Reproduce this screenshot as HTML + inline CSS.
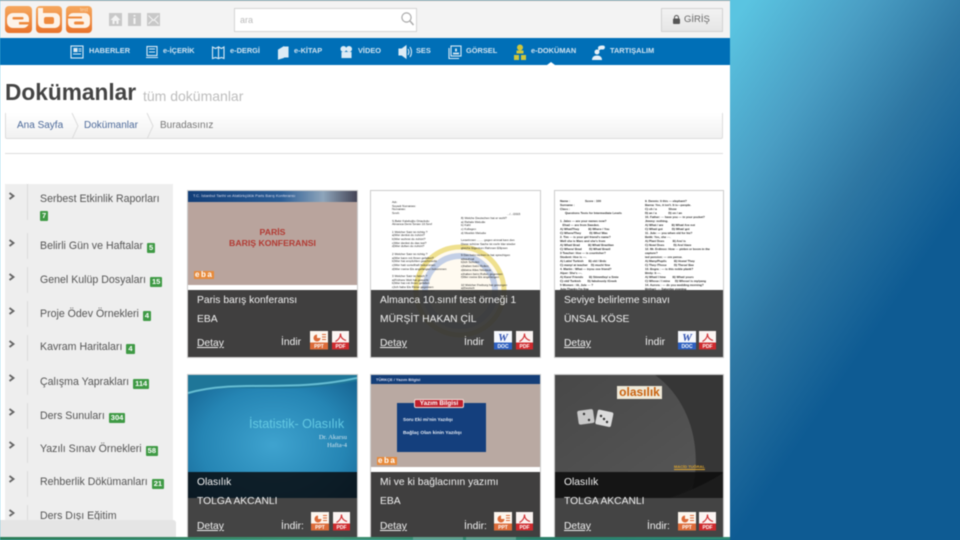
<!DOCTYPE html>
<html lang="tr"><head><meta charset="utf-8"><title>Dokümanlar</title>
<style>
html,body{margin:0;padding:0;background:#fff}
body{width:960px;height:540px;overflow:hidden;position:relative;font-family:"Liberation Sans",sans-serif}
#bg{position:absolute;left:0;top:0}
#page{position:absolute;left:0;top:0;width:730px;height:540px;background:#fff;overflow:hidden;filter:blur(.5px)}
.a,.t{position:absolute}
.t{white-space:nowrap;line-height:1}
.nav{font-size:7.4px;font-weight:bold;top:47px;color:#cfe2f0}
.side{left:40px;font-size:10.6px;color:#555}
.badge{display:inline-block;background:#3f9a45;color:#fff;font-size:7.5px;font-weight:bold;padding:1.5px 2px;border-radius:1px;margin-left:4px;vertical-align:-1px}
.sep{position:absolute;left:27px;width:1px;background:#dcdcdc}
.card{position:absolute;width:169px;overflow:hidden;background:#fff;box-shadow:0 0 0 1px #ccc}
.tt{position:absolute;left:9px;font-size:10.3px;color:#f2f2f2;white-space:nowrap;line-height:1}
.u{text-decoration:underline}
.doc{position:absolute;font-size:3px;line-height:3.7px;color:#222;white-space:pre}
.doc.b{font-weight:bold;line-height:4px;font-size:3px}
svg{display:block}
</style></head><body>
<svg id="bg" width="960" height="540"><defs><linearGradient id="g" gradientUnits="userSpaceOnUse" x1="738" y1="15" x2="1012" y2="200"><stop offset="0" stop-color="#5ac4e1"/><stop offset=".3" stop-color="#4a9ec4"/><stop offset=".58" stop-color="#2e77a3"/><stop offset=".88" stop-color="#0e5b93"/></linearGradient></defs><rect width="960" height="540" fill="url(#g)"/></svg>
<div id="page">
<!-- header -->
<div class="a" style="left:0;top:0;width:730px;height:38px;background:#f3f3f3;border-top:1px solid #aaa;box-sizing:border-box"></div>
<svg class="a" style="left:4px;top:5px" width="92" height="30">
<defs><linearGradient id="o" x1="0" y1="0" x2="0" y2="1"><stop offset="0" stop-color="#f6a85e"/><stop offset="1" stop-color="#e9742b"/></linearGradient></defs>
<rect x="1" y="1" width="27" height="27" rx="4" fill="url(#o)"/><rect x="32" y="1" width="26" height="27" rx="4" fill="url(#o)"/><rect x="62" y="1" width="26" height="27" rx="4" fill="url(#o)"/>
<rect x="3" y="8" width="22" height="15" rx="6" fill="#fdf3e8"/><rect x="8.500" y="12" width="11" height="2.500" rx="1" fill="#ee8a3d"/><rect x="15" y="17" width="10" height="2.500" fill="#ee8a3d"/>
<rect x="34" y="3" width="5" height="12" fill="#fdf3e8"/><rect x="34" y="8" width="22" height="15" rx="5" fill="#fdf3e8"/><rect x="40" y="12" width="10" height="7" rx="2" fill="#ee8a3d"/>
<rect x="64" y="8" width="22" height="15" rx="5" fill="#fdf3e8"/><rect x="64" y="11.500" width="14" height="2" fill="#ee8a3d"/><rect x="70" y="16.500" width="10" height="3" rx="1.500" fill="#ee8a3d"/>
<text x="76" y="6.500" font-size="5" font-family="Liberation Sans,sans-serif" fill="#fbd9b4">test</text>
</svg>
<svg class="a" style="left:108px;top:12px" width="54" height="15">
<rect x="1" y="1" width="13" height="13" fill="#c8c8c8"/><path d="M7.500 3L2.500 8h2v4h2v-3h2v3h2V8h2z" fill="#f3f3f3"/>
<rect x="20" y="1" width="13" height="13" fill="#c8c8c8"/><path d="M26.500 3v1.500M26.500 6v6" stroke="#f3f3f3" stroke-width="2"/>
<rect x="39" y="1" width="13" height="13" fill="#c8c8c8"/><path d="M40.500 3.500l5 5 5-5M40.500 12l4-4M50.500 12l-4-4" fill="none" stroke="#f3f3f3"/>
</svg>
<div class="a" style="left:234px;top:8px;width:183px;height:24px;background:#fff;border:1px solid #d4d4d4;box-sizing:border-box"></div>
<div class="t" style="left:240px;top:16px;font-size:9px;color:#bbb">ara</div>
<svg class="a" style="left:400px;top:11px" width="15" height="16"><circle cx="6.500" cy="6.500" r="4.600" fill="none" stroke="#aaa" stroke-width="1.200"/><path d="M10 10l3.500 4" stroke="#aaa" stroke-width="1.500"/></svg>
<div class="a" style="left:661px;top:8px;width:62px;height:24px;background:linear-gradient(#f2f2f2,#e6e6e6);border:1px solid #d2d2d2;box-sizing:border-box"></div>
<svg class="a" style="left:672px;top:14px" width="9" height="11"><rect x="1" y="4.500" width="7" height="5.500" rx="1" fill="#555"/><path d="M2.500 5V3.500a2 2 0 0 1 4 0V5" fill="none" stroke="#555"/></svg>
<div class="t" style="left:684px;top:15px;font-size:9.500px;color:#666">GİRİŞ</div>
<!-- nav -->
<div class="a" style="left:0;top:38px;width:730px;height:27px;background:#006fb7"></div>
<div class="a" style="left:547px;top:62px;width:0;height:0;border-left:4px solid transparent;border-right:4px solid transparent;border-bottom:3px solid #fff"></div>
<svg class="a" style="left:0;top:38px" width="730" height="27" fill="none" stroke="#dcebf5" stroke-width="1.100">
<rect x="71" y="8" width="12" height="12"/><rect x="74" y="10.500" width="3" height="3" fill="#dcebf5"/><path d="M78.500 11h3M78.500 13h3M73 16h8"/>
<rect x="147" y="8.500" width="10" height="9"/><path d="M146 19.500h12M149 11h6M149 14h6"/>
<path d="M212.500 9l3 1.500 3-1.500v11.500l-3-1-3 1zM218.500 9l3 1.500 2.500-1.500v11.500l-2.500-1-3 1z"/>
<path d="M278.500 12l5-3v10.500l-5 1.500zM284 9h4v10h-4z" fill="#dcebf5"/>
<circle cx="343.500" cy="11" r="2.500" fill="#dcebf5"/><circle cx="349" cy="11" r="2.500" fill="#dcebf5"/><rect x="342" y="14.500" width="9" height="5" fill="#dcebf5"/>
<path d="M399 11h3l4-3v12l-4-3h-3z" fill="#dcebf5"/><path d="M408 11c1 1.500 1 4 0 6M410 9c2 3 2 7 0 10"/>
<rect x="451" y="8" width="10" height="10"/><path d="M449 10v10.500h10"/><path d="M453 15.500h6M456 10.500v3" stroke-width="1.800"/>
<g fill="#cfc63c" stroke="none"><circle cx="520" cy="9.500" r="3"/><rect x="516.500" y="12.500" width="7" height="3"/><rect x="514" y="17" width="5" height="5"/><rect x="521" y="17" width="5" height="5"/></g>
<g fill="#e6f0f8" stroke="none"><circle cx="597" cy="14" r="2.500"/><path d="M592 22c0-3 2-4.500 5-4.500s5 1.500 5 4.500z"/><path d="M598 10c0-2 2-2.500 5-2.500 2.500 0 2.500 3 .5 4h-3l-2 1.500z"/></g>
</svg>
<div class="t nav" style="left:89px">HABERLER</div>
<div class="t nav" style="left:163px">e-İÇERİK</div>
<div class="t nav" style="left:230px">e-DERGİ</div>
<div class="t nav" style="left:294px">e-KİTAP</div>
<div class="t nav" style="left:358px">VİDEO</div>
<div class="t nav" style="left:416px">SES</div>
<div class="t nav" style="left:466px">GÖRSEL</div>
<div class="t nav" style="left:531px">e-DOKÜMAN</div>
<div class="t nav" style="left:610px">TARTIŞALIM</div>
<!-- title -->
<div class="t" style="left:5px;top:81px;font-size:22.700px;font-weight:bold;color:#444">Dokümanlar</div>
<div class="t" style="left:143px;top:89px;font-size:14px;color:#bdbdbd">tüm dokümanlar</div>
<!-- breadcrumb -->
<div class="a" style="left:5px;top:113px;width:718px;height:26px;box-sizing:border-box;background:linear-gradient(#fff,#f1f1f1);border:1px solid #ddd;border-top:0;border-radius:0 0 2px 2px"></div>
<svg class="a" style="left:60px;top:113px" width="100" height="26" fill="none" stroke="#dcdcdc"><path d="M12 0l6 13-6 13M87 0l6 13-6 13"/></svg>
<div class="t" style="left:17px;top:121px;font-size:10px;color:#4d6a9a">Ana Sayfa</div>
<div class="t" style="left:84px;top:121px;font-size:10px;color:#4d6a9a">Dokümanlar</div>
<div class="t" style="left:160px;top:121px;font-size:10px;color:#777">Buradasınız</div>
<div class="a" style="left:5px;top:153px;width:718px;height:1px;background:#ddd"></div>
<!-- sidebar -->
<div class="a" style="left:5px;top:184px;width:168px;height:340px;background:#eee"></div>
<svg class="a" style="left:8px;top:190px" width="9" height="340" fill="none" stroke="#666" stroke-width="1.800"><path d="M1.500 3l4 3-4 3M1.500 50l4 3-4 3M1.500 84l4 3-4 3M1.500 118l4 3-4 3M1.500 151l4 3-4 3M1.500 185l4 3-4 3M1.500 219l4 3-4 3M1.500 252l4 3-4 3M1.500 286l4 3-4 3M1.500 320l4 3-4 3"/></svg>
<div class="sep" style="top:184px;height:36px"></div><div class="sep" style="top:233px;height:26px"></div><div class="sep" style="top:267px;height:26px"></div><div class="sep" style="top:301px;height:26px"></div><div class="sep" style="top:335px;height:26px"></div><div class="sep" style="top:369px;height:26px"></div><div class="sep" style="top:403px;height:26px"></div><div class="sep" style="top:437px;height:26px"></div><div class="sep" style="top:471px;height:26px"></div><div class="sep" style="top:505px;height:16px"></div>
<div class="t side" style="top:194px">Serbest Etkinlik Raporları</div>
<div class="t side" style="top:209px"><span class="badge" style="margin-left:0">7</span></div>
<div class="t side" style="top:241px">Belirli Gün ve Haftalar<span class="badge">5</span></div>
<div class="t side" style="top:275px">Genel Kulüp Dosyaları<span class="badge">15</span></div>
<div class="t side" style="top:309px">Proje Ödev Örnekleri<span class="badge">4</span></div>
<div class="t side" style="top:342px">Kavram Haritaları<span class="badge">4</span></div>
<div class="t side" style="top:377px">Çalışma Yaprakları<span class="badge">114</span></div>
<div class="t side" style="top:411px">Ders Sunuları<span class="badge">304</span></div>
<div class="t side" style="top:444px">Yazılı Sınav Örnekleri<span class="badge">58</span></div>
<div class="t side" style="top:477px">Rehberlik Dökümanları<span class="badge">21</span></div>
<div class="t side" style="top:511px">Ders Dışı Eğitim</div>

<!-- card 1 -->
<div class="card" style="left:188px;top:191px;height:166px">
 <div class="a" style="left:0;top:0;width:169px;height:94px;background:#b9a49d"></div>
 <div class="a" style="left:0;top:0;width:169px;height:11px;background:linear-gradient(90deg,#123e78,#2a5c94 55%,#8ea5bb 80%,#445)"></div>
 <div class="t" style="left:5px;top:3px;font-size:4px;color:#dde">T.C. İstanbul Tarihi ve Atatürkçülük Paris Barış Konferansı</div>
 <div class="t" style="left:0;width:169px;text-align:center;top:37px;font-size:8.700px;font-weight:bold;color:#b23a33">PARİS</div>
 <div class="t" style="left:0;width:169px;text-align:center;top:48px;font-size:8.700px;font-weight:bold;color:#b23a33">BARIŞ KONFERANSI</div>
 <div class="t" style="left:6px;top:80px;font-size:8px;font-weight:bold;letter-spacing:1.500px;color:#fff;background:#e88a3a;padding:0 1px">eba</div>
 <div class="a" style="left:0;top:99px;width:169px;height:67px;background:#403f3f"></div>
 <div class="tt" style="top:105px">Paris barış konferansı</div>
 <div class="tt" style="top:124px">EBA</div>
 <div class="tt u" style="top:148px">Detay</div>
 <div class="tt" style="left:93px;top:147px">İndir</div>
</div>
<!-- card 2 -->
<div class="card" style="left:371px;top:191px;height:166px">
 <svg class="a" style="left:0;top:0" width="169" height="166"><circle cx="89" cy="100" r="44" fill="#fffaf0" stroke="#efe08e" stroke-width="5"/><circle cx="89" cy="100" r="35" fill="none" stroke="#c3cfe6" stroke-width="6"/></svg>
 <div class="doc" style="left:21px;top:10px">Adı:
Soyadı Numarası:
Numarası:
Sınıfı:

S.Bekir Kalelioğlu Ortaokulu
Almanca Dersi Sınavı 10.Sınıf

1 Welcher Satz ist richtig ?
a)Wer denkst du zuhört?
b)Wer wohnst du zuhört?
c)Wer denkst du das isst?
d)Wer duften du zuhört?

2 Welcher Satz ist richtig ?
a)Wer kann mit Ihnen gefallen?
b)Wer hat empfohlen geschmeckt
c)Wer hatt vorteilhaft bekommen
d)Wer meine Eis angefangen bekommen

3 Welcher Satz ist falsch ?
a)Frühere Welt hat gesucht
b)Wer hat mit ihnen gefallen
c)Ich habe Eis Reise gegessen
d)Wir kommen auch zusammen</div>
 <div class="doc" style="left:90px;top:26px">8) Welche Deutschen hat er wohl?
a) Rahale Melodie
b) Kahl
c) Kollegen
d) Musikin Melodie

Leserinnen ........ gegen einmal kam den
Diese schöne Sache ist mehr klar wieder
gleiche Eigentum Rahmen Ellipsen

9 Das beim Holzen in hat sprechigen
a)kaufmal
b)Ich Schulen
c)haben beim Rollen
d)kleine Alles Nikolaus
e)haben beim Rollen gegessen
f)Wer meine Eis angefangen

10 Welcher Freiburg hat gesungen
a)Deutsch
b)Sehr schön wurde
c)Eis angefangen</div>
 <div class="doc" style="left:136px;top:22px">.../.../2015</div>
 <div class="a" style="left:0;top:99px;width:169px;height:67px;background:rgba(52,52,52,.93)"></div>
 <div class="tt" style="top:105px">Almanca 10.sınıf test örneği 1</div>
 <div class="tt" style="top:124px">MÜRŞİT HAKAN ÇİL</div>
 <div class="tt u" style="top:148px">Detay</div>
 <div class="tt" style="left:93px;top:147px">İndir</div>
</div>
<!-- card 3 -->
<div class="card" style="left:555px;top:191px;height:166px;width:168px">
 <div class="doc b" style="left:5px;top:8px">Name :                  Score : 100
Surname :
Class :
      Questions Tests for Intermediate Levels

1. Jaleo --- are your names now?
   Ehad --- are from Sweden.
A) What/They           B) Where / You
C) Where/They          D) Who/ Was
2. Tim --- is your girl friend's name?
Well she is Marc and she's from
A) What/ Brad          B) What/ Brazilian
C) Where/ Brad         D) What/ Brazil
3 Teacher: Hoe --- is courtisher?
Student: Hoe is ---.
A) Latin/ Turkish      B) old / Brdc
C) many/ at teacher    D) much/ fine
4. Martin : What --- tryou ove friend?
Alper: She's ---.
A) Kare/ Friends       B) Stimmlley/ a Smie
C) old/ Turkish        D) fabulously /Greek
5 Women : Hi, Jule --- ?
Jule:Thanks I'm fine</div>
 <div class="doc b" style="left:90px;top:8px">9. Dennis: Ii this --- elephant?
Barna: Yes, it isn't. It is---people.
C) oh / a              Show
D) an / a              D) on / an
10. Father: --- have you --- in your pocket?
Jimmy: nothing.
A) What / are          B) What/ Are not
C) What/ got           D) What/ got
11. Jule: --- you when old for hiz?
Betik: Yes, she ---.
A) Plan/ Does          B) Are/ is
C) Now/ Does           D) Are/ Have
12. Mr. Erdinoo: How --- pinlen or boom in the
capture?
ted pension: --- ore pense.
A) Many/Pupils         B) Hoew/ They
C) They /Those         D) These/ Bee
13. Bogra : --- is this noble plank?
Birdy: It ---.
A) What/ I hine        B) What/ yours
C) Whose / I mine      D) Whose/ is my/yang
14. Aurora : --- do you wedding morning?
Birthari: --- Saturday evening</div>
 <div class="a" style="left:0;top:99px;width:168px;height:67px;background:rgba(50,50,50,.9)"></div>
 <div class="tt" style="top:105px">Seviye belirleme sınavı</div>
 <div class="tt" style="top:124px">ÜNSAL KÖSE</div>
 <div class="tt u" style="top:148px">Detay</div>
 <div class="tt" style="left:90px;top:147px">İndir</div>
</div>
<!-- card 4 -->
<div class="card" style="left:188px;top:375px;height:165px;background:#444">
 <div class="a" style="left:0;top:0;width:169px;height:123px;background:radial-gradient(ellipse 120px 95px at 85px 70px,#3fa3cf,#2585b4 60%,#15618f)"></div>
 <svg class="a" style="left:0;top:0" width="169" height="30"><path d="M0 20C40 5 90 22 169 6V0H0z" fill="#1f7698"/><path d="M0 18C50 4 100 18 169 3" fill="none" stroke="#66bdd3" stroke-width="2"/></svg>
 <div class="t" style="left:61px;top:43px;font-size:12.600px;color:#63c8e2">İstatistik- Olasılık</div>
 <div class="t" style="left:0;width:159px;text-align:right;top:60px;font-size:6.500px;font-family:'Liberation Serif',serif;color:#d5e5ee">Dr. Akarsu</div>
 <div class="t" style="left:0;width:159px;text-align:right;top:68px;font-size:6.500px;font-family:'Liberation Serif',serif;color:#d5e5ee">Hafta-4</div>
 <div class="a" style="left:0;top:97px;width:169px;height:26px;background:rgba(8,10,14,.85)"></div>
 <div class="tt" style="top:103px">Olasılık</div>
 <div class="tt" style="top:122px">TOLGA AKCANLI</div>
 <div class="tt u" style="top:147px">Detay</div>
 <div class="tt" style="left:93px;top:147px">İndir:</div>
</div>
<!-- card 5 -->
<div class="card" style="left:371px;top:375px;height:165px">
 <div class="a" style="left:0;top:0;width:169px;height:92px;background:#b9a9a2"></div>
 <div class="a" style="left:0;top:0;width:169px;height:9px;background:#143e78"></div>
 <div class="t" style="left:5px;top:3px;font-size:4px;font-weight:bold;color:#dde">TÜRKÇE / Yazım Bilgisi</div>
 <div class="a" style="left:26px;top:28px;width:89px;height:49px;background:#143f7d"></div>
 <div class="a" style="left:43px;top:24px;width:50px;height:9px;background:#c0202c;border:1px solid #efdcd8;box-sizing:border-box;border-radius:2px"></div>
 <div class="t" style="left:43px;top:25.500px;width:50px;text-align:center;font-size:6.300px;font-weight:bold;color:#fff">Yazım Bilgisi</div>
 <div class="t" style="left:32px;top:43px;font-size:4.600px;font-weight:bold;color:#e6ecf5">Soru Eki mi'nin Yazılışı</div>
 <div class="t" style="left:32px;top:57px;font-size:4.900px;font-weight:bold;color:#e6ecf5">Bağlaç Olan kinin Yazılışı</div>
 <div class="t" style="left:6px;top:82px;font-size:8px;font-weight:bold;letter-spacing:1.500px;color:#fff;background:#e88a3a;padding:0 1px">eba</div>
 <div class="a" style="left:0;top:97px;width:169px;height:68px;background:#403f3f"></div>
 <div class="tt" style="top:103px">Mi ve ki bağlacının yazımı</div>
 <div class="tt" style="top:122px">EBA</div>
 <div class="tt u" style="top:147px">Detay</div>
 <div class="tt" style="left:93px;top:147px">İndir:</div>
</div>
<!-- card 6 -->
<div class="card" style="left:555px;top:375px;height:165px;width:168px;background:#444">
 <svg class="a" style="left:0;top:0" width="168" height="123"><defs><linearGradient id="d6" x1="0" y1="0" x2="1" y2="1"><stop offset="0" stop-color="#484848"/><stop offset="1" stop-color="#585858"/></linearGradient></defs><rect width="168" height="123" fill="url(#d6)"/><path d="M100 0C135 25 150 75 135 123h33V0z" fill="#363636"/><path d="M115 123c15-5 38-15 53-25v25z" fill="#808080"/>
 <g transform="rotate(-8 30 43)"><rect x="23" y="35" width="16" height="14" rx="2" fill="#c8c8c8"/></g><g transform="rotate(12 50 45)"><rect x="41" y="36" width="16" height="15" rx="2" fill="#dcdcdc"/></g><g fill="#333"><circle cx="29" cy="39" r="1.200"/><circle cx="34" cy="45" r="1.200"/><circle cx="46" cy="41" r="1.200"/><circle cx="52" cy="47" r="1.200"/><circle cx="49" cy="44" r="1.200"/></g></svg>
 <div class="a" style="left:62px;top:11px;width:45px;height:13px;background:#efe9d8"></div>
 <div class="t" style="left:62px;top:11px;width:45px;text-align:center;font-size:12px;font-weight:bold;color:#c9620f">olasılık</div>
 <div class="t u" style="left:119px;top:90px;font-size:4px;font-weight:bold;color:#d9a22e">MACİD TUĞRAL</div>
 <div class="a" style="left:0;top:97px;width:168px;height:26px;background:rgba(10,10,10,.85)"></div>
 <div class="tt" style="top:103px">Olasılık</div>
 <div class="tt" style="top:122px">TOLGA AKCANLI</div>
 <div class="tt u" style="top:147px">Detay</div>
 <div class="tt" style="left:92px;top:147px">İndir:</div>
</div>
<!-- file icons -->
<svg class="a" style="left:0;top:0" width="730" height="540">
<defs>
<g id="ppt"><rect width="18" height="18" fill="#fdf6ee"/><rect y="11.500" width="18" height="7" fill="#dc6b39"/><path d="M7 3.500a3.500 3.500 0 1 0 3.500 3.500H7z" fill="#dc6b39"/><path d="M12 3.500h4M12 6h4M12 8.500h4" stroke="#dc6b39"/></g>
<g id="pdf"><rect width="17" height="18" fill="#fbf4f2"/><rect y="11.500" width="17" height="7" fill="#cf2a2e"/><path d="M3.500 10.500C7 8.500 8.500 6 8.500 2.500c0 3.500 2 6 5.500 7" fill="none" stroke="#cf2a2e" stroke-width="1.100"/></g>
<g id="doc"><rect width="18" height="18" fill="#f6f8fd"/><rect y="11.500" width="18" height="7" fill="#2d5fc0"/></g>
</defs>
<use href="#ppt" x="310" y="331"/><use href="#pdf" x="332" y="331"/>
<use href="#doc" x="494" y="331"/><use href="#pdf" x="516" y="331"/>
<use href="#doc" x="678" y="331"/><use href="#pdf" x="699" y="331"/>
<use href="#ppt" x="311" y="512"/><use href="#pdf" x="333" y="512"/>
<use href="#ppt" x="494" y="512"/><use href="#pdf" x="516" y="512"/>
<use href="#ppt" x="678" y="512"/><use href="#pdf" x="699" y="512"/>
<g font-family="Liberation Sans,sans-serif" font-size="5" font-weight="bold" fill="#fff" text-anchor="middle">
<text x="319" y="348">PPT</text><text x="340.500" y="348">PDF</text><text x="503" y="348">DOC</text><text x="524.500" y="348">PDF</text><text x="687" y="348">DOC</text><text x="707.500" y="348">PDF</text>
<text x="320" y="529">PPT</text><text x="341.500" y="529">PDF</text><text x="503" y="529">PPT</text><text x="524.500" y="529">PDF</text><text x="687" y="529">PPT</text><text x="707.500" y="529">PDF</text></g>
<g font-family="Liberation Serif,serif" font-size="11" font-weight="bold" font-style="italic" fill="#2d4fb0" text-anchor="middle"><text x="503" y="341">W</text><text x="687" y="341">W</text></g>
</svg>
<!-- bottom -->
<div class="a" style="left:0;top:520px;width:176px;height:17px;background:#e5e5e5;border-radius:0 3px 0 0"></div>
<div class="a" style="left:0;top:537px;width:730px;height:3px;background:linear-gradient(90deg,#2c7d58,#3f9272 45%,#2b8068 75%,#2f8a74)"></div>
<div class="a" style="left:413px;top:537px;width:50px;height:3px;background:#5fa08c"></div>
<div class="a" style="left:466px;top:537px;width:50px;height:3px;background:#5fa08c"></div>
</div>
</body></html>
